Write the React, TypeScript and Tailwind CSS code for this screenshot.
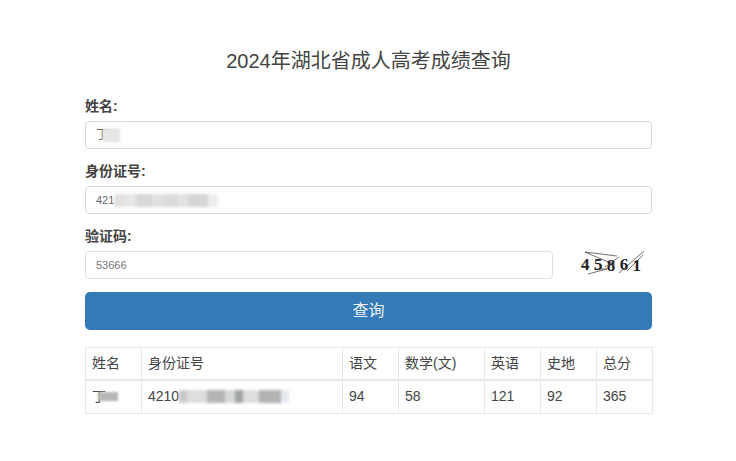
const sans = "font-['Liberation_Sans','Noto_Sans_CJK_SC',sans-serif]";

const columns = [
  { title: "姓名", width: "w-[56px]" },
  { title: "身份证号", width: "w-[201px]" },
  { title: "语文", width: "w-[56px]" },
  { title: "数学(文)", width: "w-[86px]" },
  { title: "英语", width: "w-[56px]" },
  { title: "史地", width: "w-[56px]" },
  { title: "总分", width: "w-[56px]" },
];

const Mosaic = ({ shades }: { shades: string[] }) => (
  <span className="inline-flex h-[13px] items-stretch blur-[1.5px]">
    {shades.map((shade, i) => (
      <span key={i} className={shade} />
    ))}
  </span>
);

const Captcha = () => (
  <div className="relative h-[28px] w-[66px]">
    <div className="absolute left-0 top-[4px] flex w-[60px] justify-between font-['Liberation_Serif',serif] text-[17px] font-bold leading-[20px] text-[#222]">
      <span>4</span>
      <span>5</span>
      <span className="translate-y-[1px]">8</span>
      <span>6</span>
      <span className="translate-y-[1px]">1</span>
    </div>
    <svg className="absolute left-0 top-0" width="66" height="28" viewBox="0 0 66 28" fill="none" stroke="#333" strokeWidth="0.7">
      <path d="M4 1 L34 14" />
      <path d="M4 1 L36 5" />
      <path d="M7 23 L26 18" />
      <path d="M24 16 L38 6" />
      <path d="M38 22 L63 0" />
      <path d="M46 20 L62 4" />
      <path d="M13 18 L26 18" />
    </svg>
  </div>
);

export default function App() {
  return (
    <div className={`${sans} min-h-[461px] w-[736px] overflow-hidden bg-white pl-[85px] pr-[84px] pt-[46px] text-[#333]`}>
      <h1 className="mb-[20px] text-center text-[20px] font-normal leading-[30px] text-[#444]">
        2024年湖北省成人高考成绩查询
      </h1>

      <label className="mb-[5px] block text-[14px] font-bold leading-[20px] text-[#444]">姓名:</label>
      <div className="flex h-[28px] items-center rounded-[4px] border border-[#d8d8d8] px-[10px] text-[12px] text-[#666]">
        <span>丁</span>
        <span className="-ml-[5px] h-[14px] w-[17px] bg-[#e6e6e6] blur-[1px]" />
      </div>

      <label className="mb-[5px] mt-[12px] block text-[14px] font-bold leading-[20px] text-[#444]">身份证号:</label>
      <div className="flex h-[28px] items-center rounded-[4px] border border-[#d8d8d8] px-[10px] text-[11px] text-[#666]">
        <span>421</span>
        <Mosaic
          shades={[
            "w-[12px] bg-[#e2e2e2]",
            "w-[10px] bg-[#e8e8e8]",
            "w-[16px] bg-[#d8d8d8]",
            "w-[12px] bg-[#e0e0e0]",
            "w-[14px] bg-[#dadada]",
            "w-[10px] bg-[#e2e2e2]",
            "w-[20px] bg-[#d6d6d6]",
            "w-[10px] bg-[#eeeeee]",
          ]}
        />
      </div>

      <label className="mb-[5px] mt-[12px] block text-[14px] font-bold leading-[20px] text-[#444]">验证码:</label>
      <div className="flex items-center">
        <div className="flex h-[28px] w-[468px] items-center rounded-[4px] border border-[#e0e0e0] px-[10px] text-[11px] text-[#777]">
          53666
        </div>
        <div className="ml-[28px]">
          <Captcha />
        </div>
      </div>

      <button className="mt-[13px] block h-[38px] w-[567px] rounded-[5px] bg-[#337ab7] text-[16px] text-[#e8f0f8]">
        查询
      </button>

      <table className="mt-[17px] w-[567px] table-fixed border-collapse text-[14px] text-[#444]">
        <thead>
          <tr className="h-[32px]">
            {columns.map((col) => (
              <th key={col.title} className={`${col.width} border border-[#e8e8e8] border-b-2 px-[6px] text-left font-normal`}>
                {col.title}
              </th>
            ))}
          </tr>
        </thead>
        <tbody>
          <tr className="h-[34px]">
            <td className="border border-[#e8e8e8] px-[6px]">
              <div className="flex items-center">
                <span>丁</span>
                <span className="-ml-[8px] h-[9px] w-[20px] bg-[#b8b8b8] blur-[1px]" />
              </div>
            </td>
            <td className="border border-[#e8e8e8] px-[6px]">
              <div className="flex items-center">
                <span>4210</span>
                <Mosaic
                  shades={[
                    "w-[8px] bg-[#c8cac8]",
                    "w-[20px] bg-[#dddddd]",
                    "w-[18px] bg-[#b4b4b4]",
                    "w-[10px] bg-[#d8d8d8]",
                    "w-[8px] bg-[#a0a4a4]",
                    "w-[16px] bg-[#dddddd]",
                    "w-[22px] bg-[#b4b2b2]",
                    "w-[8px] bg-[#e8eaf2]",
                  ]}
                />
              </div>
            </td>
            <td className="border border-[#e8e8e8] px-[6px]">94</td>
            <td className="border border-[#e8e8e8] px-[6px]">58</td>
            <td className="border border-[#e8e8e8] px-[6px]">121</td>
            <td className="border border-[#e8e8e8] px-[6px]">92</td>
            <td className="border border-[#e8e8e8] px-[6px]">365</td>
          </tr>
        </tbody>
      </table>
    </div>
  );
}
